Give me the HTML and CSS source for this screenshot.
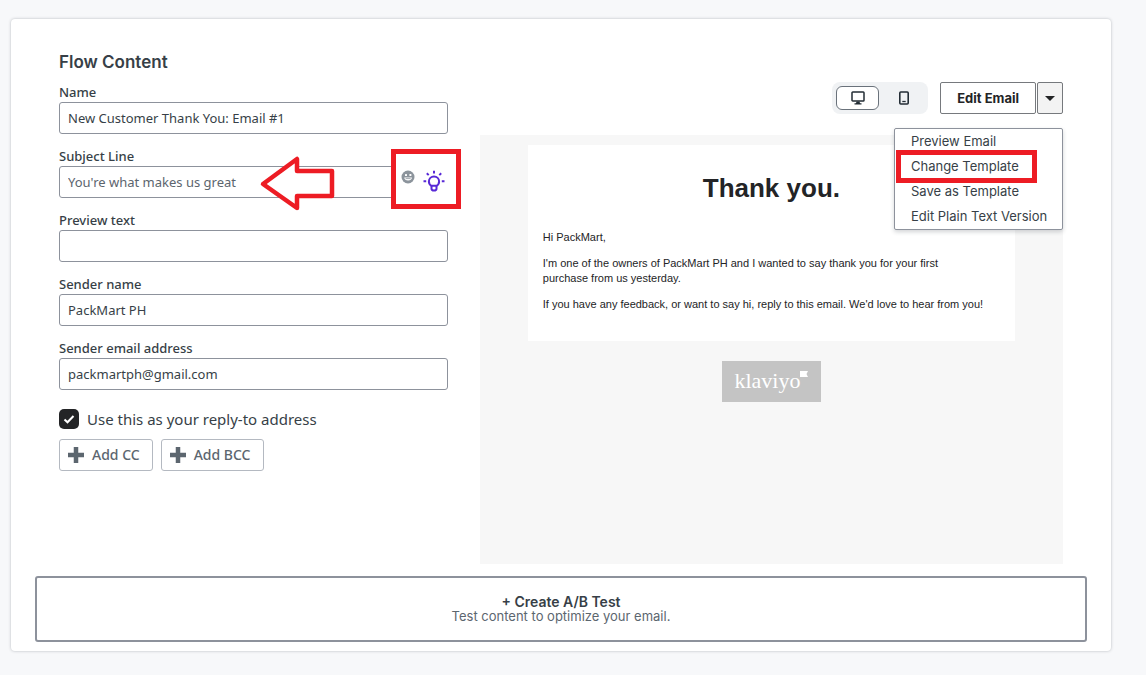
FILE: index.html
```html
<!DOCTYPE html>
<html lang="en">
<head>
<meta charset="utf-8">
<meta name="viewport" content="width=device-width, initial-scale=1">
<title>Flow Content</title>
<link rel="stylesheet" href="styles.css">
</head>
<body>
<main class="card">
  <div class="columns">
    <form class="details">
      <h1 class="title">Flow Content</h1>
      <div class="field">
        <label for="name">Name</label>
        <input id="name" type="text" value="New Customer Thank You: Email #1">
      </div>
      <div class="field">
        <label for="subject">Subject Line</label>
        <div class="subject">
          <input id="subject" class="subject-input" type="text" value="You're what makes us great">
          <svg class="arrow" width="76" height="58" viewBox="0 0 76 58" aria-hidden="true">
            <path d="M4 29 L38 4 V16 H73 V41 H38 V53 Z" fill="#fff" stroke="#ed1c24" stroke-width="4.5" stroke-linejoin="round"/>
          </svg>
          <div class="tools">
            <button type="button" class="icon-button" aria-label="Insert emoji">
              <svg width="14" height="14" viewBox="0 0 14 14" aria-hidden="true">
                <circle cx="7" cy="7" r="6.5" fill="#8c949c"/>
                <rect x="4" y="4" width="2" height="2" rx=".6" fill="#fff"/>
                <rect x="8.4" y="4" width="2" height="2" rx=".6" fill="#fff"/>
                <path d="M3.2 7.4h7.8c-.2 1.9-1.7 3-3.9 3s-3.7-1.100-3.900-3z" fill="#fff"/>
                <path d="M4.600 8.600h5" stroke="#8c949c" stroke-width=".8"/>
              </svg>
            </button>
            <button type="button" class="icon-button bulb" aria-label="Suggest subject lines">
              <svg width="22" height="22" viewBox="0 0 22 22" fill="none" stroke="#5829d6" stroke-width="2" aria-hidden="true">
                <path d="M8.500 15.800C6.600 14.800 5.900 13 5.900 11.500a5.100 5.100 0 0 1 10.200 0c0 1.500-.7 3.300-2.600 4.300z"/>
                <path d="M8.500 15.500v3.200q0 1.800 2.500 1.800t2.500-1.800v-3.200"/>
                <path d="M11 .8v2.600M3.800 3.200l1.900 1.900M18.200 3.200l-1.900 1.900M.5 11.200h2.700M18.800 11.200h2.700"/>
              </svg>
            </button>
          </div>
        </div>
      </div>
      <div class="field">
        <label for="preview">Preview text</label>
        <input id="preview" type="text">
      </div>
      <div class="field">
        <label for="sender">Sender name</label>
        <input id="sender" type="text" value="PackMart PH">
      </div>
      <div class="field">
        <label for="address">Sender email address</label>
        <input id="address" type="email" value="packmartph@gmail.com">
      </div>
      <label class="check">
        <input type="checkbox" checked>
        <svg class="tick" width="12" height="12" viewBox="0 0 12 12" aria-hidden="true"><path d="M1.500 6.500 4.500 9.300 10.500 3" fill="none" stroke="#fff" stroke-width="2"/></svg>
        <span>Use this as your reply-to address</span>
      </label>
      <div class="copies">
        <button type="button" class="add">
          <svg width="16" height="16" viewBox="0 0 16 16" aria-hidden="true"><path d="M8 0v16M0 8h16" stroke="#5c666f" stroke-width="4.500"/></svg>
          Add CC
        </button>
        <button type="button" class="add">
          <svg width="16" height="16" viewBox="0 0 16 16" aria-hidden="true"><path d="M8 0v16M0 8h16" stroke="#5c666f" stroke-width="4.500"/></svg>
          Add BCC
        </button>
      </div>
    </form>

    <section class="preview">
      <div class="toolbar">
        <div class="devices">
          <button type="button" class="device active" aria-label="Desktop">
            <svg width="14" height="14" viewBox="0 0 14 14" aria-hidden="true"><rect x="1" y="1" width="12" height="9" rx=".8" fill="none" stroke="#232d35" stroke-width="1.500"/><path d="M5.500 10.500h3l.5 1.700h1.500V13.500h-7v-1.300H5z" fill="#232d35"/></svg>
          </button>
          <button type="button" class="device" aria-label="Mobile">
            <svg width="12" height="14" viewBox="0 0 12 14" aria-hidden="true"><rect x="1.800" y="1" width="8.400" height="12" rx="1" fill="none" stroke="#232d35" stroke-width="1.600"/><path d="M4.300 10.500h3.400" stroke="#232d35" stroke-width="1.300"/></svg>
          </button>
        </div>
        <div class="split">
          <button type="button" class="edit">Edit Email</button>
          <button type="button" class="caret" aria-label="More actions" aria-expanded="true">
            <svg width="10" height="5" viewBox="0 0 10 5" aria-hidden="true"><path d="M0 0h10L5 5z" fill="#232426"/></svg>
          </button>
          <div class="menu">
            <button type="button">Preview Email</button>
            <button type="button" class="marked">Change Template</button>
            <button type="button">Save as Template</button>
            <button type="button">Edit Plain Text Version</button>
          </div>
        </div>
      </div>
      <div class="canvas">
        <article class="email">
          <h2>Thank you.</h2>
          <p>Hi PackMart,</p>
          <p>I'm one of the owners of PackMart PH and I wanted to say thank you for your first<br>purchase from us yesterday.</p>
          <p>If you have any feedback, or want to say hi, reply to this email. We'd love to hear from you!</p>
        </article>
        <div class="brand">
          <span>klaviyo</span>
          <svg width="8" height="6" viewBox="0 0 8 6" aria-hidden="true"><path d="M0 0h8L6.500 3 8 6H0z" fill="#fff"/></svg>
        </div>
      </div>
    </section>
  </div>
  <button type="button" class="ab-test">
    <strong>+ Create A/B Test</strong>
    <span>Test content to optimize your email.</span>
  </button>
</main>
</body>
</html>
```

FILE: styles.css
```css
*,
*::after {
  box-sizing: border-box;
}

body {
  margin: 0;
  padding: 19px 35px 24px 11px;
  background: #f7f8fa;
  color: #373f47;
  font-family: "Noto Sans", "Open Sans", sans-serif;
  font-size: 13px;
  line-height: 20px;
}

button,
input {
  margin: 0;
  font: inherit;
  color: inherit;
}

button {
  padding: 0;
  border: 0;
  background: none;
}

svg {
  display: block;
  flex: none;
}

.card {
  padding: 31px 24px 9px;
  border-radius: 4px;
  background: #fff;
  box-shadow: 0 0 3px rgba(35, 45, 53, 0.3);
}

.columns {
  display: grid;
  grid-template-columns: 2fr 3fr;
  gap: 32px;
  padding: 0 24px;
}

.title {
  margin: 0 0 8px;
  font: 600 17px/24px Inter, sans-serif;
}

.field {
  margin-bottom: 12px;
}

.field label {
  display: block;
  font-weight: 500;
}

.field input {
  display: block;
  width: 100%;
  height: 32px;
  padding: 0 8px;
  border: 1px solid #8d929c;
  border-radius: 3px;
  background: #fff;
}

.subject {
  position: relative;
}

.field .subject-input {
  color: #5c656e;
}

.arrow {
  position: absolute;
  left: 200px;
  top: -11px;
}

.tools {
  position: absolute;
  right: -13px;
  top: -17px;
  display: flex;
  gap: 8px;
  width: 70px;
  height: 60px;
  padding: 16px 0 0 5px;
  border: 5px solid #ed1c24;
  background: #fff;
}

.icon-button {
  align-self: flex-start;
}

.check {
  position: relative;
  display: flex;
  align-items: center;
  gap: 8px;
  padding-top: 7px;
  font-size: 15px;
}

.check input {
  width: 20px;
  height: 20px;
  appearance: none;
  border-radius: 5px;
  background: #232426;
}

.tick {
  position: absolute;
  left: 4px;
  bottom: 4px;
}

.copies {
  display: flex;
  gap: 8px;
  margin-top: 10px;
}

.add {
  display: flex;
  align-items: center;
  gap: 8px;
  height: 32px;
  padding: 0 12px 0 8px;
  border: 1px solid #b4b9c1;
  border-radius: 3px;
  color: #5c666f;
  font-size: 14px;
  font-weight: 500;
}

.preview {
  display: flex;
  flex-direction: column;
  padding-top: 32px;
}

.toolbar {
  display: flex;
  justify-content: flex-end;
  gap: 12px;
  margin-bottom: 21px;
}

.devices {
  display: flex;
  gap: 4px;
  padding: 4px;
  width: 96px;
  border-radius: 8px;
  background: #f0f2f4;
}

.device {
  display: grid;
  place-items: center;
  flex: 1;
  border-radius: 6px;
}

.device.active {
  border: 1px solid #6a727b;
  background: #fff;
}

.split {
  position: relative;
  display: flex;
  gap: 1px;
  height: 32px;
  font-family: Inter, sans-serif;
}

.edit {
  padding: 0 16px;
  border: 1px solid #76797d;
  border-radius: 2px;
  color: #232426;
  font-size: 13px;
  font-weight: 700;
}

.caret {
  display: grid;
  place-items: center;
  width: 26px;
  border: 1px solid #76797d;
  border-radius: 2px;
  background: #f3f3f3;
}

.menu {
  position: absolute;
  right: 0;
  top: 46px;
  width: 169px;
  border: 1px solid #8d929c;
  border-radius: 2px;
  background: #fff;
  box-shadow: 0 2px 4px rgba(35, 45, 53, 0.2);
}

.menu button {
  position: relative;
  display: block;
  width: 100%;
  height: 25px;
  padding: 0 0 2px 16px;
  text-align: left;
  white-space: nowrap;
}

.marked::after {
  content: "";
  position: absolute;
  left: 1px;
  top: -4px;
  width: 141px;
  height: 33px;
  border: 5px solid #ed1c24;
}

.menu .marked {
  z-index: 1;
}

.canvas {
  flex: 1;
  min-height: 429px;
  padding: 10px 48px;
  background: #f7f7f7;
}

.email {
  padding: 26px 15px 18px;
  background: #fff;
  color: #232426;
  font: 11px/15px "Liberation Sans", Arial, sans-serif;
}

.email h2 {
  margin: 0 0 25px;
  font-size: 26px;
  line-height: 34px;
  text-align: center;
}

.email p {
  margin: 0 0 11px;
}

.brand {
  display: flex;
  justify-content: center;
  width: 99px;
  height: 41px;
  margin: 20px auto 0;
  padding-top: 10px;
  background: #c4c4c4;
  color: #fff;
  font: 22px/20px "Liberation Serif", serif;
}

.ab-test {
  display: flex;
  flex-direction: column;
  align-items: center;
  justify-content: center;
  width: 100%;
  min-height: 66px;
  margin-top: 12px;
  border: 2px solid #8d929c;
  border-radius: 3px;
  font: 13px/15px Inter, sans-serif;
  color: #5c666f;
}

.ab-test strong {
  color: #373f47;
  font-size: 14px;
  font-weight: 600;
}
```
